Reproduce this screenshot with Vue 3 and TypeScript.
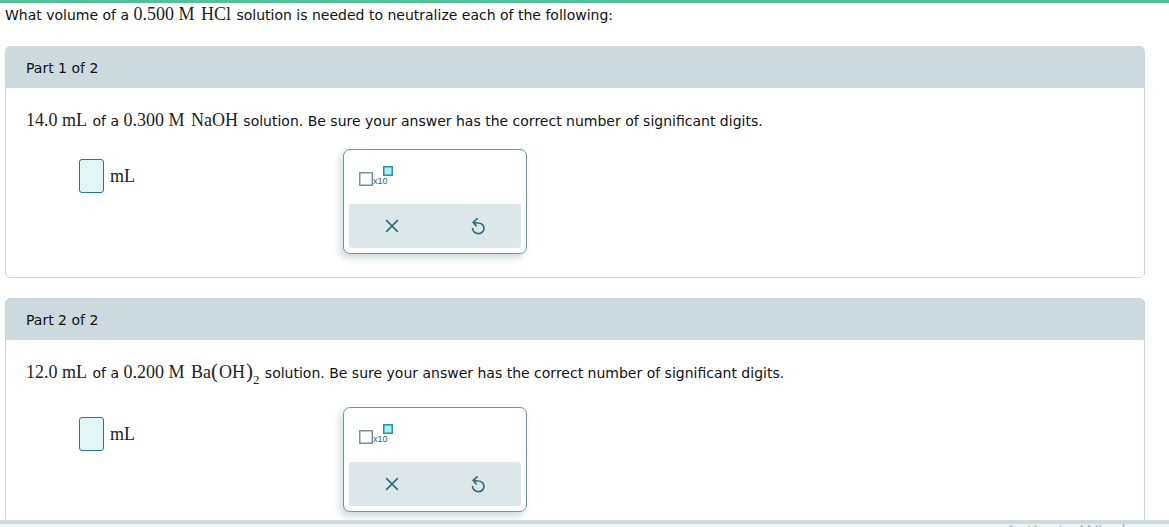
<script setup lang="ts">
import { ref } from 'vue'

interface Part {
  id: number
  volume: string
  molarity: string
  formula: string
  group?: string
  count?: string
}

const parts: Part[] = [
  { id: 1, volume: '14.0 mL', molarity: '0.300 M', formula: 'NaOH' },
  { id: 2, volume: '12.0 mL', molarity: '0.200 M', formula: 'Ba', group: 'OH', count: '2' },
]

const answers = ref<string[]>(parts.map(() => ''))

function clear(index: number): void {
  answers.value[index] = ''
}
</script>

<template>
  <div class="page">
    <main class="content">
      <p class="question">
        What volume of a <span class="math">0.500 M</span> <span class="math chem">HCl</span> solution is needed to
        neutralize each of the following:
      </p>

      <section v-for="(part, i) in parts" :key="part.id" class="card">
        <h2 class="card-title">Part {{ part.id }} of {{ parts.length }}</h2>
        <div class="card-body">
          <p class="prompt" :class="{ tall: part.group }">
            <span class="math">{{ part.volume }}</span> of a <span class="math">{{ part.molarity }}</span>&nbsp;<span
              class="math chem"
              >{{ part.formula }}<template v-if="part.group"
                ><span class="paren">(</span><span class="group">{{ part.group }}</span><span class="paren">)</span
                ><sub>{{ part.count }}</sub></template
              ></span
            >
            solution. Be sure your answer has the correct number of significant digits.
          </p>
          <div class="work">
            <label class="answer">
              <input v-model="answers[i]" class="field" type="text" :aria-label="`Volume for part ${part.id}`" />
              <span class="math unit">mL</span>
            </label>
            <div class="palette">
              <button class="sci" type="button" aria-label="Scientific notation">
                <svg width="36" height="24" viewBox="0 0 36 24">
                  <rect x="1.75" y="8.75" width="12.5" height="12.5" fill="#fff" stroke="#71969c" stroke-width="1.5" />
                  <rect x="25.75" y="2.75" width="8.5" height="8.5" fill="#a4eef6" stroke="#2b92a0" stroke-width="1.5" />
                  <text x="15" y="20" class="sci-text">x10</text>
                </svg>
              </button>
              <div class="tools">
                <button type="button" aria-label="Clear" @click="clear(i)">
                  <svg width="18" height="18" viewBox="0 0 18 18">
                    <path d="M3.2 3.2 14.8 14.8M14.8 3.2 3.2 14.8" />
                  </svg>
                </button>
                <button type="button" aria-label="Reset" @click="clear(i)">
                  <svg width="18" height="18" viewBox="0 0 18 18">
                    <path d="M3.6 10.8A5.7 5.3 0 1 0 9.3 6L4.6 5.5M8.6 1.3 4.2 5.4 7.6 9.4" />
                  </svg>
                </button>
              </div>
            </div>
          </div>
        </div>
      </section>
    </main>
    <footer class="bottom"><span class="notice">Activate Windows</span></footer>
  </div>
</template>

<style>
body {
  margin: 0;
  background: #fff;
}
</style>

<style scoped>
.page {
  box-sizing: border-box;
  height: 100vh;
  overflow: hidden;
  display: flex;
  flex-direction: column;
  border-top: 3px solid #52c19a;
  font-family: Verdana, "DejaVu Sans", sans-serif;
  font-size: 14px;
  color: #111;
}
.content {
  flex: 1;
  min-height: 0;
  overflow: hidden;
  padding: 0 24px 0 5px;
}
.question {
  margin: 0 0 19px;
  line-height: 24px;
}
.math {
  margin-right: 1px;
  font-family: "Liberation Serif", serif;
  font-size: 18px;
  line-height: 20px;
  color: #222;
}
.chem {
  margin-left: 1px;
}
.card {
  margin-bottom: 20px;
  border: 1px solid #cdd5d8;
  border-radius: 5px;
  overflow: hidden;
}
.card-title {
  margin: 0;
  padding: 1px 20px 0;
  background: #ccd9de;
  font-size: 14px;
  font-weight: 400;
  line-height: 40px;
  box-shadow: 0 0 0 1px #ccd9de;
}
.card-body {
  position: relative;
  padding: 20px 20px 23px;
  background: #fff;
}
.prompt {
  margin: 0 0 15px;
  line-height: 26px;
}
.prompt.tall {
  margin-bottom: 21px;
}
.paren {
  font-size: 21px;
  line-height: 1;
}
.group {
  margin: 0 1px;
}
sub {
  font-size: 13px;
  line-height: 0;
  vertical-align: -6px;
}
.work {
  display: flex;
  align-items: flex-start;
  padding-left: 53px;
}
.answer {
  width: 264px;
  padding-top: 10px;
  display: flex;
  align-items: center;
  gap: 6px;
}
.field {
  box-sizing: border-box;
  width: 25px;
  height: 34px;
  padding: 0 4px;
  border: 1px solid #27788a;
  border-radius: 3px;
  background: #e0f6f8;
  font: 18px "Liberation Serif", serif;
}
.palette {
  box-sizing: border-box;
  width: 184px;
  padding: 5px;
  border: 1px solid #6f989d;
  border-radius: 7px;
  background: #fff;
  box-shadow: -3px 4px 7px rgba(60, 110, 120, 0.25);
}
button {
  border: 0;
  padding: 0;
  background: none;
  cursor: pointer;
}
svg {
  display: block;
}
.sci {
  display: block;
  margin: 9px 0 16px 9px;
}
.sci-text {
  font-family: "Liberation Sans", sans-serif;
  font-size: 9px;
  fill: #2c626c;
}
.tools {
  display: grid;
  grid-template-columns: 1fr 1fr;
  height: 44px;
  border-radius: 3px;
  background: #dde7e9;
}
.tools button {
  display: grid;
  place-items: center;
}
.tools path {
  fill: none;
  stroke: #336d7a;
  stroke-width: 1.7;
}
.bottom {
  box-sizing: border-box;
  height: 7px;
  overflow: hidden;
  border-top: 4px solid #cddbdc;
  background: #eef3f5;
  text-align: right;
}
.notice {
  display: block;
  margin-top: -5px;
  padding-right: 8px;
  font: 19px/24px "Open Sans", sans-serif;
  color: #adb5b8;
}
</style>
